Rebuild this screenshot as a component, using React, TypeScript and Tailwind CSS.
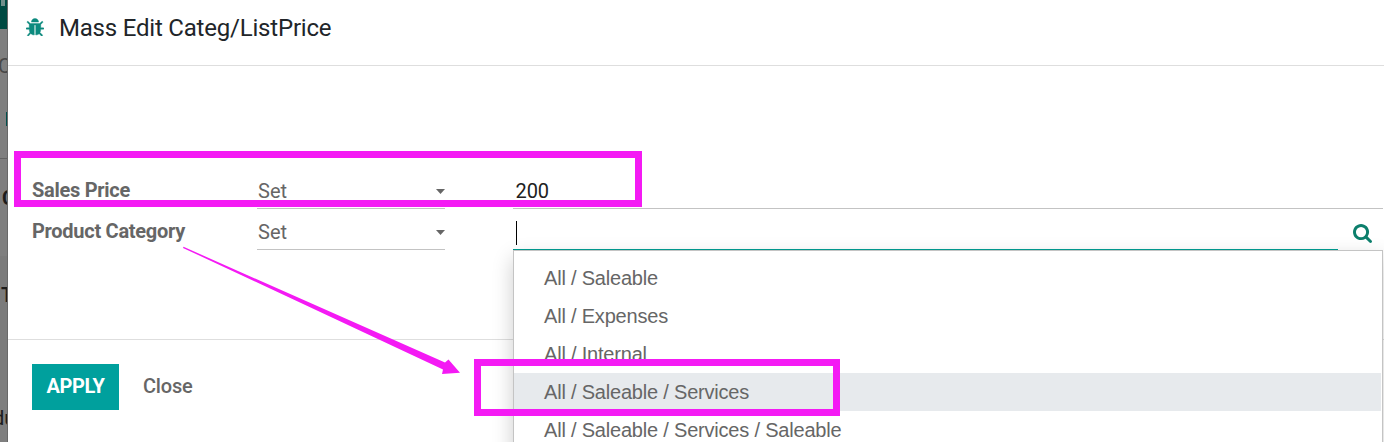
import React from "react";

const categories = [
  { name: "All / Saleable" },
  { name: "All / Expenses" },
  { name: "All / Internal" },
  { name: "All / Saleable / Services", active: true },
  { name: "All / Saleable / Services / Saleable" },
];

function BugIcon() {
  return (
    <svg viewBox="32 64 1600 1520" className="mb-px h-[18px] w-[18px] shrink-0 fill-[#0c8a7e] stroke-[#0c8a7e] stroke-[36]">
      <path d="M1632 960q0 26-19 45t-45 19h-224q0 171-67 290l208 209q19 19 19 45t-19 45q-18 19-45 19t-45-19l-198-197q-5 5-15 13t-42 28.5-65 36.5-82 29-97 13v-896h-128v896q-51 0-101.5-13.5t-87-33-66-39-43.5-32.5l-15-14-183 207q-20 21-48 21-24 0-43-16-19-18-20.5-44.5t15.5-46.5l202-227q-58-114-58-274h-224q-26 0-45-19t-19-45 19-45 45-19h224v-294l-173-173q-19-19-19-45t19-45 45-19 45 19l173 173h844l173-173q19-19 45-19t45 19 19 45-19 45l-173 173v294h224q26 0 45 19t19 45zm-480-576h-640q0-133 93.5-226.5t226.5-93.5 226.5 93.5 93.5 226.5z" />
    </svg>
  );
}

function SearchIcon() {
  return (
    <svg viewBox="64 128 1664 1664" className="h-[19px] w-[19px] fill-[#0c7f6c]">
      <path d="M1216 832q0-185-131.5-316.5t-316.5-131.5-316.5 131.5-131.5 316.5 131.5 316.5 316.5 131.5 316.5-131.5 131.5-316.5zm512 832q0 52-38 90t-90 38q-54 0-90-38l-343-342q-179 124-399 124-143 0-273.5-55.5t-225-150-150-225-55.5-273.5 55.5-273.5 150-225 225-150 273.5-55.5 273.5 55.5 225 150 150 225 55.5 273.5q0 220-124 399l343 343q37 37 37 90z" />
    </svg>
  );
}

function SetSelect() {
  return (
    <div className="flex h-full w-[188px] items-center justify-between border-b border-[#c3c3c3] pt-[7px] text-[#666]">
      <span className="pb-[2px] pl-px">Set</span>
      <svg viewBox="0 0 9 5" className="h-[5px] w-[9px] fill-[#666]">
        <path d="M0 0h9L4.500 5z" />
      </svg>
    </div>
  );
}

function Backdrop() {
  return (
    <aside className="flex w-2 shrink-0 flex-col overflow-hidden border-r border-[#696969] bg-[#7f7f7f] text-[20px] leading-[24px] whitespace-nowrap text-[#1c1c1c]">
      <div className="-mr-px h-[29px] shrink-0 bg-[#004a42]">
        <div className="ml-px h-[6px] w-1 bg-[#718f8b]" />
      </div>
      <div className="h-[83px] shrink-0 pt-[25px] text-[#484848]">
        <span className="-ml-[2px]">C</span>
      </div>
      <div className="-mr-px ml-[6px] h-[14px] shrink-0 bg-[#004f4c]" />
      <div className="h-[33px] shrink-0 border-b border-[#636363]" />
      <div className="h-[97px] shrink-0 pt-[27px] pl-[2px] font-bold">C</div>
      <div className="h-[124px] shrink-0 bg-[#7b7b7b] pt-[27px] pl-px font-bold">T</div>
      <div className="pt-[26px]">
        <span className="-ml-[7px]">du</span>
      </div>
    </aside>
  );
}

export default function App() {
  return (
    <div className="relative flex h-[442px] w-[1384px] overflow-hidden bg-white font-['Roboto',sans-serif] text-[20px] leading-[24px]">
      <Backdrop />
      <main className="flex min-w-0 flex-1 flex-col">
        <header className="flex h-[66px] shrink-0 items-center gap-[15px] border-b border-[#dedede] pb-[10px] pl-[18px]">
          <BugIcon />
          <h1 className="text-[24px] leading-[30px] tracking-[-0.2px] text-[#212529]">Mass Edit Categ/ListPrice</h1>
        </header>

        <section className="h-[274px] shrink-0 border-b border-[#dedede] pt-[102px] pl-6">
          <div className="flex h-[41px]">
            <label className="w-[225px] pt-[10px] font-bold tracking-[-0.28px] text-[#666]">Sales Price</label>
            <SetSelect />
            <div className="ml-[68px] w-[870px] border-b border-[#c3c3c3] pt-[11px] pl-[2.5px] tracking-[-0.1px] text-[#212121]">200</div>
          </div>
          <div className="flex h-[41px]">
            <label className="w-[225px] pt-[10px] font-bold tracking-[-0.28px] text-[#666]">Product Category</label>
            <SetSelect />
            <div className="relative ml-[68px] flex w-[870px]">
              <div className="relative z-10 w-[825px] border-b border-[#00968c] pt-[12px] pl-[3px]">
                <div className="h-6 w-px bg-black" />
              </div>
              <div className="relative z-10 pt-[15px] pl-[15px]">
                <SearchIcon />
              </div>
              <ul className="absolute top-[41px] left-0 h-[240px] w-[870px] border border-[#c4c4c4] bg-white pt-2 font-['Liberation_Sans',Arial,sans-serif] text-[20px] tracking-[-0.2px] text-[#666] shadow-[0_8px_20px_rgba(0,0,0,0.2)]">
                {categories.map((c) => (
                  <li
                    key={c.name}
                    className={
                      c.active
                        ? "mr-px flex h-[38px] items-center bg-[#e7eaed] pl-[30px]"
                        : "mr-px flex h-[38px] items-center pl-[30px]"
                    }
                  >
                    {c.name}
                  </li>
                ))}
              </ul>
            </div>
          </div>
        </section>

        <footer className="flex gap-[24px] pt-6 pl-6">
          <button className="h-[46px] w-[87px] bg-[#00a09d] pb-[2px] font-bold tracking-[-0.4px] text-white">APPLY</button>
          <button className="h-[46px] pb-[2px] font-medium tracking-[-0.2px] text-[#666]">Close</button>
        </footer>
      </main>

      <div className="absolute top-[151px] left-[14px] h-[56px] w-[628px] border-[7px] border-[#f41af4]" />
      <div className="absolute top-[359px] left-[474px] h-[57px] w-[366px] border-[7px] border-[#f41af4]" />
      <svg viewBox="180 244 284 134" className="absolute top-[244px] left-[180px] h-[134px] w-[284px] fill-[#f41af4]">
        <path d="M183.500 246.800L445 362.500L448.500 359.500L460 372.700L442 374L443 369.500L183 247.900Z" />
      </svg>
    </div>
  );
}
